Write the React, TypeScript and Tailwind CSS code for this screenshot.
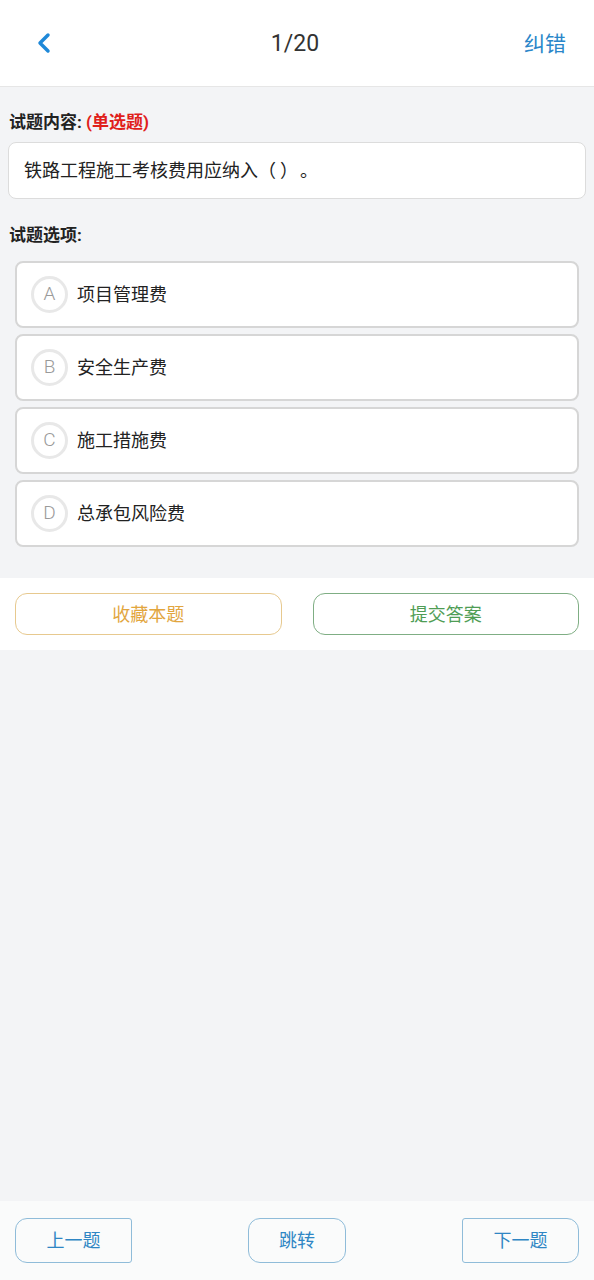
import { ChevronLeft } from 'lucide-react';

const options = [
  { key: 'A', text: '项目管理费' },
  { key: 'B', text: '安全生产费' },
  { key: 'C', text: '施工措施费' },
  { key: 'D', text: '总承包风险费' }
];

const font = { fontFamily: 'Roboto, "Noto Sans CJK SC", "Noto Sans", sans-serif' };

export default function App() {
  return (
    <div className="flex min-h-[1280px] w-full flex-col bg-[#f3f4f6] text-[#222]" style={font}>
      <header className="flex h-[87px] items-center justify-between border-b border-[#e6e6e6] bg-white px-[28px] pt-[3px]">
        <ChevronLeft className="-mt-[3px] h-[32px] w-[32px] text-[#1e88d8]" strokeWidth={2.6} />
        <div className="pl-[6px] text-[23px] text-[#333]">1/20</div>
        <div className="text-[21px] text-[#2a86c9]">纠错</div>
      </header>

      <section className="px-[8px] pt-[24px]">
        <p className="pl-[1px] text-[17px] font-bold leading-[22px] text-[#222]">
          试题内容: <span className="text-[#e0201a]">(单选题)</span>
        </p>
        <div className="mt-[9px] flex h-[57px] items-center rounded-[8px] border border-[#dcdcdc] bg-white px-[15px] text-[18px] text-[#222]">
          <span>铁路工程施工考核费用应纳入</span>
          <span className="inline-block w-[18px] text-center">（</span>
          <span className="inline-block w-[4px]" />
          <span className="inline-block w-[18px] text-center">）</span>
          <span className="inline-block w-[18px] pl-[2px]">。</span>
        </div>
        <p className="mt-[25px] pl-[1px] text-[17px] font-bold leading-[22px] text-[#222]">试题选项:</p>
      </section>

      <div className="mt-[15px] flex flex-col gap-[6px] px-[15px]">
        {options.map((item) => (
          <div
            key={item.key}
            className="flex h-[67px] items-center gap-[9px] rounded-[8px] border-2 border-[#d6d6d6] bg-white px-[14px]"
          >
            <span className="flex h-[37px] w-[37px] items-center justify-center rounded-full border-[3px] border-[#e8e8e8] text-[19px] font-light text-[#9a9a9a]">
              {item.key}
            </span>
            <span className="text-[18px] text-[#222]">{item.text}</span>
          </div>
        ))}
      </div>

      <div className="mt-[31px] flex h-[72px] items-center gap-[31px] bg-white px-[15px]">
        <button className="flex h-[42px] flex-1 items-center justify-center rounded-[12px] border border-[#e7c98f] text-[18px] text-[#e2a63f]">
          收藏本题
        </button>
        <button className="flex h-[42px] flex-1 items-center justify-center rounded-[12px] border border-[#7fae84] text-[18px] text-[#4f9d55]">
          提交答案
        </button>
      </div>

      <div className="flex-1" />

      <footer className="flex h-[79px] items-center justify-between bg-[#fafbfb] px-[15px]">
        <button className="flex h-[45px] w-[117px] items-center justify-center rounded-l-[12px] rounded-r-[3px] border border-[#8fbcd9] text-[18px] text-[#2f86c4]">
          上一题
        </button>
        <button className="flex h-[45px] w-[98px] items-center justify-center rounded-[12px] border border-[#8fbcd9] text-[18px] text-[#2f86c4]">
          跳转
        </button>
        <button className="flex h-[45px] w-[117px] items-center justify-center rounded-l-[3px] rounded-r-[12px] border border-[#8fbcd9] text-[18px] text-[#2f86c4]">
          下一题
        </button>
      </footer>
    </div>
  );
}
